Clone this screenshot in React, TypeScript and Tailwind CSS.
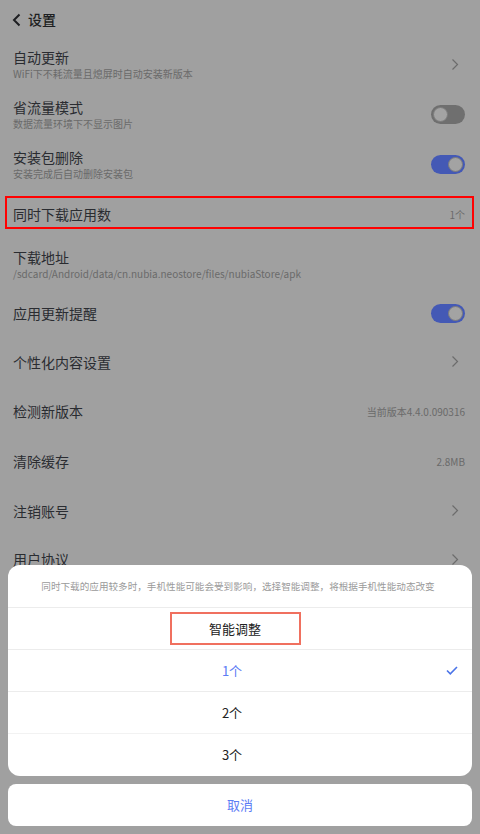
import { ReactNode } from "react";

const font = { fontFamily: '"Noto Sans CJK SC", "Noto Sans", sans-serif' };

function Chevron() {
  return (
    <svg className="mr-[6px]" width="8" height="13" viewBox="0 0 8 13" fill="none">
      <path d="M1.5 1.5 6.5 6.5 1.5 11.5" stroke="#6c6c6c" strokeWidth="1.2" />
    </svg>
  );
}

function Toggle({ on }: { on: boolean }) {
  return (
    <div
      className={
        on
          ? "flex h-[19px] w-[34px] items-center justify-end rounded-full bg-[#4459b5] px-[2px]"
          : "flex h-[19px] w-[34px] items-center justify-start rounded-full bg-[#6f6f6f] px-[2px]"
      }
    >
      <div className="h-[15px] w-[15px] rounded-full border border-[#7c7c7c] bg-[#a3a3a3]" />
    </div>
  );
}

function Row({
  title,
  sub,
  right,
  h = "h-[50px]",
  boxed,
}: {
  title: string;
  sub?: string;
  right?: ReactNode;
  h?: string;
  boxed?: boolean;
}) {
  return (
    <div className={`relative flex ${h} items-center justify-between pl-[13px] pr-[15px]`}>
      <div className="flex flex-col">
        <span className="text-[14px] leading-[18px] text-[#2a2c31]">{title}</span>
        {sub && <span className="mt-[1px] text-[10px] leading-[14px] text-[#6a6a6a]">{sub}</span>}
      </div>
      {right}
      {boxed && (
        <div className="absolute left-[5px] right-[6px] top-[7px] h-[33px] border-2 border-[#ff0000]" />
      )}
    </div>
  );
}

const value = (t: string) => <span className="text-[10px] text-[#6a6a6a]">{t}</span>;

export default function App() {
  return (
    <div style={font} className="relative h-[834px] w-[480px] overflow-hidden bg-[#a0a0a0]">
      <div className="flex h-[39px] items-center gap-[6px] pl-[12px]">
        <svg width="10" height="14" viewBox="0 0 10 14" fill="none">
          <path d="M7.5 1.5 2 7l5.5 5.5" stroke="#1e1f22" strokeWidth="2" />
        </svg>
        <span className="text-[14px] font-medium text-[#1e1f22]">设置</span>
      </div>

      <Row title="自动更新" sub="WiFi下不耗流量且熄屏时自动安装新版本" right={<Chevron />} />
      <Row title="省流量模式" sub="数据流量环境下不显示图片" right={<Toggle on={false} />} />
      <Row title="安装包删除" sub="安装完成后自动删除安装包" right={<Toggle on />} />
      <Row title="同时下载应用数" right={value("1个")} boxed />
      <Row title="下载地址" sub="/sdcard/Android/data/cn.nubia.neostore/files/nubiaStore/apk" />
      <Row title="应用更新提醒" right={<Toggle on />} h="h-[48px]" />
      <Row title="个性化内容设置" right={<Chevron />} h="h-[49px]" />
      <Row title="检测新版本" right={value("当前版本4.4.0.090316")} />
      <Row title="清除缓存" right={value("2.8MB")} />
      <Row title="注销账号" right={<Chevron />} h="h-[49px]" />
      <Row title="用户协议" right={<Chevron />} h="h-[48px]" />

      <div className="absolute left-[8px] right-[8px] top-[565px] flex flex-col">
        <div className="flex flex-col overflow-hidden rounded-[12px] bg-white">
          <div className="flex h-[43px] items-center justify-center border-b border-[#ececec] pr-[4px] text-[9.6px] text-[#9a9a9a]">
            同时下载的应用较多时，手机性能可能会受到影响，选择智能调整，将根据手机性能动态改变
          </div>
          <div className="flex h-[42px] items-center justify-center border-b border-[#ececec] pr-[10px]">
            <div className="flex h-[33px] w-[131px] items-center justify-center border-2 border-[#f0705f] text-[13px] text-[#222]">
              智能调整
            </div>
          </div>
          <div className="relative flex h-[42px] items-center justify-center border-b border-[#ececec] pr-[16px] text-[13px] text-[#5c7cf5]">
            1个
            <svg className="absolute right-[14px]" width="12" height="9" viewBox="0 0 12 9" fill="none">
              <path d="M1 4.5 4.3 7.8 11 1" stroke="#4b74e8" strokeWidth="1.6" />
            </svg>
          </div>
          <div className="flex h-[42px] items-center justify-center border-b border-[#f2f2f2] pr-[16px] text-[13px] text-[#222]">
            2个
          </div>
          <div className="flex h-[42px] items-center justify-center pr-[16px] text-[13px] text-[#222]">3个</div>
        </div>
        <div className="mt-[8px] flex h-[42px] items-center justify-center rounded-[8px] bg-white text-[13px] text-[#5c7cf5]">
          取消
        </div>
      </div>
    </div>
  );
}
